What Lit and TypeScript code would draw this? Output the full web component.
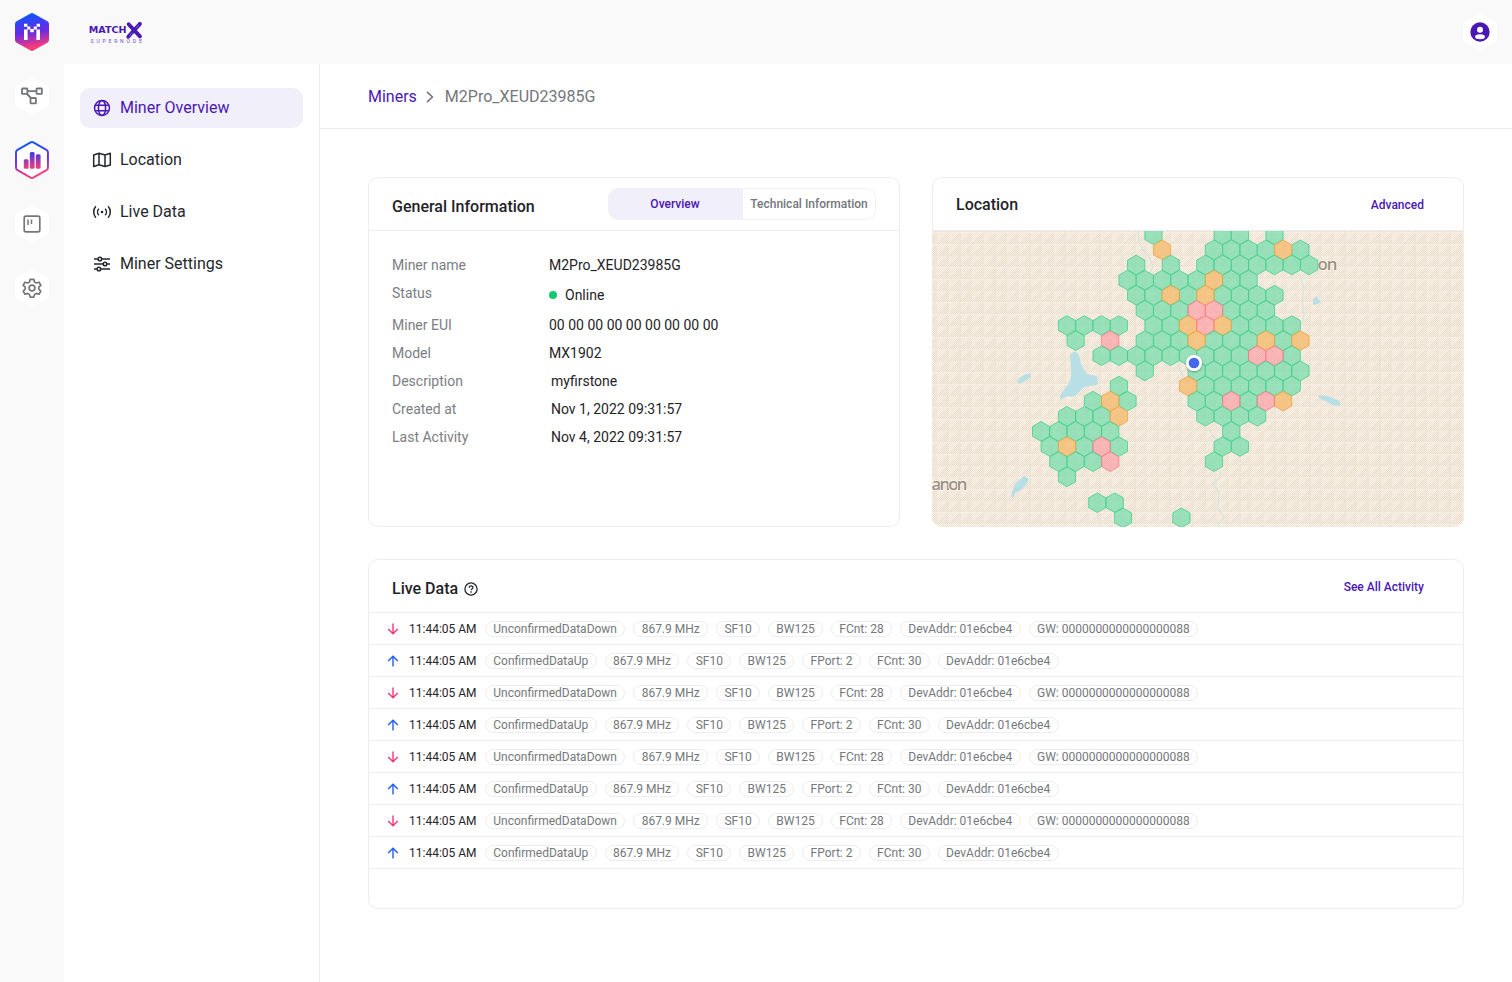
import { LitElement, html, svg, css } from "lit";
import { customElement } from "lit/decorators.js";

type Tone = "g" | "o" | "p";

const HALF = 8.645;
const PITCH = 15.13;
// Each row: [row index, "column+tone" list]
const ROWS: Array<[number, string]> = [
  [-6, "10g 18g 20g 24g"],
  [-5, "17g 19g 21g 23g 27g 11o 25o"],
  [-4, "8g 12g 16g 18g 20g 22g 24g 26g 28g"],
  [-3, "7g 9g 11g 13g 15g 19g 21g 17o"],
  [-2, "8g 10g 14g 18g 20g 22g 24g 12o 16o"],
  [-1, "9g 11g 13g 19g 21g 23g 15p 17p"],
  [0, "0g 2g 4g 6g 10g 12g 20g 22g 24g 26g 14o 18o 16p"],
  [1, "1g 9g 11g 13g 17g 19g 21g 25g 15o 23o 27o 5p"],
  [2, "4g 6g 8g 10g 12g 14g 16g 18g 20g 26g 22p 24p"],
  [3, "9g 15g 17g 19g 21g 23g 25g 27g"],
  [4, "6g 16g 18g 20g 22g 24g 26g 14o"],
  [5, "3g 7g 15g 17g 21g 5o 25o 19p 23p"],
  [6, "0g 2g 4g 16g 18g 20g 22g 6o"],
  [7, "-3g -1g 1g 3g 5g 19g"],
  [8, "-2g 2g 6g 18g 20g 0o 4p"],
  [9, "-1g 1g 3g 17g 5p"],
  [10, "0g"],
];

const CELLS: Array<{ x: number; y: number; tone: Tone }> = ROWS.flatMap(([r, list]) =>
  list.split(" ").map((c) => ({
    x: 135 + parseInt(c, 10) * HALF,
    y: 94.5 + r * PITCH,
    tone: c.slice(-1) as Tone,
  }))
).concat([
  { x: 165.3, y: 271.7, tone: "g" },
  { x: 182.7, y: 271.7, tone: "g" },
  { x: 191, y: 286.8, tone: "g" },
  { x: 249.4, y: 286.8, tone: "g" },
]);

const hexPoints = (x: number, y: number) =>
  [[0, -9.8], [8.6, -4.9], [8.6, 4.9], [0, 9.8], [-8.6, 4.9], [-8.6, -4.9]]
    .map(([a, b]) => `${(x + a).toFixed(2)},${(y + b).toFixed(2)}`)
    .join(" ");

// Stippled triangles, three by three to a 35px tile so every dot sits on a whole pixel.
const stipple = (dense: boolean) => {
  let d = "";
  for (const oy of [0, 12, 23])
    for (const ox of [0, 12, 23])
      for (let y = 0; y < 11; y++)
        for (let x = 0; x < 12; x++)
          if ((x + y) % 2 === 0 && x + y > 9 === dense) d += `M${ox + x} ${oy + y}h1v1h-1z`;
  return d;
};

@customElement("coverage-map")
class CoverageMap extends LitElement {
  static styles = css`
    :host { display: block; width: 532px; height: 296px; overflow: hidden; border-radius: 0 0 10px 10px; }
    svg { display: block; }
    .g { fill: #5cdba1; fill-opacity: 0.6; stroke: #3fce8b; stroke-opacity: 0.75; }
    .o { fill: #f6b158; fill-opacity: 0.66; stroke: #f0a440; stroke-opacity: 0.8; }
    .p { fill: #ff949e; fill-opacity: 0.62; stroke: #fa7480; stroke-opacity: 0.75; }
    .label { font: 500 17px "Noto Sans", sans-serif; fill: #998d80; stroke: #f8f2e8; stroke-width: 2px; paint-order: stroke; }
  `;
  render() {
    return html`<svg width="532" height="296" viewBox="0 0 532 296">
      <defs>
        <pattern id="land" x="5" y="2" width="35" height="35" patternUnits="userSpaceOnUse">
          <path fill="#f2e9dc" d=${stipple(false)}/><path fill="#e8decf" d=${stipple(true)}/>
        </pattern>
        <filter id="shade" x="-50%" y="-50%" width="200%" height="200%">
          <feDropShadow dx="0" dy="1" stdDeviation="1.2" flood-opacity="0.35"/>
        </filter>
      </defs>
      <rect width="532" height="296" fill="#f7eee1"/>
      <rect width="532" height="296" fill="url(#land)"/>
      <g fill="#b9dfe6">
        <path d="M138 124c2-4 7-4 9 0 1 5 2 9 4 13l4 6 10 2 1 8c-5 3-11 1-15 4-4 4-7 8-11 9-5-2-8 1-12 3 0-6 4-10 7-14 5-6 4-11 4-17z"/>
        <path d="M85 149l7-5 6-2 1 4-6 4-6 3z"/>
        <path d="M80 261l3-8 9-8 5 3-3 6-6 6-5 2-2 5-2-2z"/>
        <path d="M381 68l2-1 1-2 5 6-3 2-5 1z"/>
        <path d="M386 164l10 1 7 3 5 2v5l-7-1-6-3-8-4z"/>
      </g>
      <g fill="none" stroke="#d5e3e1" stroke-width="1.2">
        <path d="M206 0l1 10 4 9 7 8 3 9-3 6M368 43l4 15-2 10 2 16-2 8M277 198l4 7 8 8M288 298l-2-6 6-6-6-8 1-17-6-8 7-6v-8M251 128l-5 7 6 12"/>
      </g>
      <text class="label" x="385.5" y="38.5" textLength="20">on</text>
      <text class="label" x="-0.5" y="259" textLength="36">anon</text>
      ${CELLS.map((c) => svg`<polygon class=${c.tone} points=${hexPoints(c.x, c.y)}/>`)}
      <circle cx="262" cy="132" r="8" fill="#fff" filter="url(#shade)"/>
      <circle cx="262" cy="132" r="5.3" fill="#4467ec"/>
    </svg>`;
  }
}

const HEX = "M15.600 0.400a3 3 0 0 1 2.800 0l14 7.900a3 3 0 0 1 1.600 2.600v16.200a3 3 0 0 1-1.600 2.600l-14 7.900a3 3 0 0 1-2.800 0l-14-7.900A3 3 0 0 1 0 27.100V10.900a3 3 0 0 1 1.600-2.600z";

const grad = (id: string) => svg`<linearGradient id=${id} x1="0.42" y1="0" x2="0.58" y2="1">
  <stop offset="0.05" stop-color="#1252ff"/><stop offset="0.5" stop-color="#6a2ae6"/><stop offset="0.9" stop-color="#fb3c78"/></linearGradient>`;

const hexTile = (body: unknown) => html`<svg class="hex" width="34" height="38" viewBox="0 0 34 38"><path d=${HEX} fill="#fff"/>${body}</svg>`;

const INFO: Array<[string, string, string]> = [
  ["Miner name", "M2Pro_XEUD23985G", "v"],
  ["Status", "Online", "v status"],
  ["Miner EUI", "00 00 00 00 00 00 00 00 00", "v"],
  ["Model", "MX1902", "v"],
  ["Description", "myfirstone", "v in"],
  ["Created at", "Nov 1, 2022 09:31:57", "v in"],
  ["Last Activity", "Nov 4, 2022 09:31:57", "v in"],
];

const DOWN = ["UnconfirmedDataDown", "867.9 MHz", "SF10", "BW125", "FCnt: 28", "DevAddr: 01e6cbe4", "GW: 0000000000000000088"];
const UP = ["ConfirmedDataUp", "867.9 MHz", "SF10", "BW125", "FPort: 2", "FCnt: 30", "DevAddr: 01e6cbe4"];

@customElement("app-root")
class AppRoot extends LitElement {
  static styles = css`
    :host { display: block; font-family: Roboto, sans-serif; color: #1f2328; }
    * { box-sizing: border-box; }
    svg { display: block; flex: none; }
    .page { display: grid; grid-template: 64px 918px / 64px 256px 1fr; width: 1512px; height: 982px; overflow: hidden; background: #fff; }
    .top { grid-column: 1 / 4; background: #f9f9f9; display: flex; align-items: center; padding: 0 15px; }
    .brand { margin-left: 39px; padding-top: 1px; overflow: visible; }
    .avatar { margin-left: auto; }
    .rail { background: #f9f9f9; display: flex; flex-direction: column; align-items: center; gap: 26px; padding-top: 13px; }
    .side { border-right: 1px solid #ebedf0; padding: 24px 16px; display: flex; flex-direction: column; gap: 12px; }
    .item { height: 40px; border-radius: 10px; display: flex; align-items: center; gap: 8px; padding-left: 12px; font-size: 16px; line-height: 24px; color: #24282c; }
    .item.on { background: #f1eff9; color: #4a17b5; }
    .crumbs { height: 65px; border-bottom: 1px solid #ebedf0; padding: 1px 48px 0; display: flex; align-items: center; font-size: 16px; color: #74777c; }
    .crumbs a { color: #4a17b5; }
    .crumbs svg { margin: 0 11px 0 9px; }
    .body { padding: 48px; display: grid; grid-template-columns: 532px 532px; gap: 32px; }
    .card { border: 1px solid #ebedf0; border-radius: 10px; height: 350px; }
    .wide { grid-column: 1 / 3; }
    .head { height: 53px; border-bottom: 1px solid #ebedf0; display: flex; align-items: center; justify-content: space-between; padding: 0 23px; }
    .title { font-size: 16px; font-weight: 500; line-height: 24px; display: flex; align-items: center; gap: 6px; padding-top: 1px; }
    .low { padding-top: 5px; }
    .link { font-size: 12px; font-weight: 500; line-height: 16px; color: #4a17b5; padding: 2px 16px 0 0; }
    .tabs { display: flex; width: 268px; height: 32px; border: 1px solid #f1eff9; border-radius: 10px; overflow: hidden; font-size: 12px; font-weight: 500; line-height: 30px; text-align: center; color: #74777c; }
    .tab { flex: 1; }
    .tab.on { flex: 0 0 134px; background: #f1eff9; color: #4a17b5; padding-right: 2px; }
    .info { display: grid; grid-template-columns: 157px 1fr; row-gap: 8px; padding: 24px 23px; font-size: 14px; line-height: 20px; }
    .k { color: #7b7e83; }
    .in { padding-left: 2px; }
    .status { display: flex; align-items: center; gap: 8px; height: 24px; }
    .dot { width: 8px; height: 8px; border-radius: 50%; background: #17c672; }
    .map { margin-left: -1px; }
    .row { height: 32px; border-bottom: 1px solid #ebedf0; display: flex; align-items: center; padding-left: 18px; font-size: 12px; }
    .time { width: 76px; margin-left: 10px; }
    .chips { display: flex; gap: 8px; }
    .chip { height: 16px; line-height: 14px; padding: 0 7.4px 0 7.26px; border: 1px solid #ebedf0; border-radius: 8px; color: #74777c; white-space: nowrap; }
    .mt { font: 700 9.3px "DejaVu Sans", sans-serif; }
    .sn { font: 5.4px Roboto, sans-serif; }
  `;

  render() {
    return html`<div class="page">
      <header class="top">
        <svg width="34" height="38" viewBox="0 0 34 38">
          <defs>${grad("a")}</defs>
          <path d=${HEX} fill="url(#a)"/>
          <path fill="#fff" d="M9 10.700h3.400v3H9zM21.600 10.700H25v3h-3.400zM12.200 13.400h3.100v3.200h-3.100zM18.700 13.400h3.100v3.200h-3.100zM15.200 16h3.600v3.200h-3.600zM9 16.600h3.600V27H9zM21.400 16.600H25V27h-3.600z"/>
        </svg>
        <svg class="brand" width="56" height="24" viewBox="0 0 56 24">
          <text class="mt" x="-0.500" y="12.500" textLength="39.500" lengthAdjust="spacingAndGlyphs" fill="#4a17b5">MATCH</text>
          <path d="M41.200 3.400l11.800 12.600M53 3L40.800 16.500" stroke="#4a17b5" stroke-width="4" stroke-linecap="round"/>
          <path d="M42 15.200l3-3.200M48.800 7.600l3-3.200M43.500 16l2.500-2.700" stroke="#a58bdd" stroke-width="0.700"/>
          <text class="sn" x="1.500" y="22.600" textLength="53.500" fill="#7550cc">SUPERNODE</text>
        </svg>
        <div class="avatar">${hexTile(svg`<g transform="translate(17 19)"><circle r="9.700" fill="#4a17b5"/><circle cy="-2.300" r="3" fill="#fff"/><ellipse cy="4.800" rx="5" ry="2.500" fill="#fff"/></g>`)}</div>
      </header>

      <nav class="rail">
        ${hexTile(svg`<g fill="none" stroke="#74777c" stroke-width="1.800" stroke-linejoin="round"><rect x="7" y="11.500" width="5.400" height="5.400" rx=".6"/><rect x="21.500" y="11.500" width="5.400" height="5.400" rx=".6"/><rect x="15.500" y="21" width="5.400" height="5.400" rx=".6"/><path d="M12.400 14.200h9.100M11.500 16.500l5 5"/></g>`)}
        <svg width="34" height="38" viewBox="0 0 34 38">
          <defs>${grad("b")}<linearGradient id="c" gradientUnits="userSpaceOnUse" x1="0" y1="9" x2="0" y2="28"><stop offset="0.100" stop-color="#3f37e8"/><stop offset="1" stop-color="#fb3c78"/></linearGradient></defs>
          <path d=${HEX} fill="#fff" stroke="url(#b)" stroke-width="2" transform="translate(1 1) scale(.94 .947)"/>
          <g fill="url(#c)"><rect x="8.800" y="18.300" width="4.800" height="9.500" rx="1.500"/><rect x="14.800" y="11" width="4.800" height="16.800" rx="1.500"/><rect x="20.800" y="13.300" width="4.800" height="14.500" rx="1.500"/></g>
        </svg>
        ${hexTile(svg`<g fill="none" stroke="#74777c" stroke-width="1.700"><rect x="9.200" y="11.200" width="15.600" height="15.600" rx="1.800"/><path d="M13 14.500v5.500M16.500 14.500v4.500" stroke-width="1.500"/></g>`)}
        ${hexTile(svg`<g fill="none" stroke="#74777c" stroke-width="1.700" stroke-linejoin="round"><path d="M15.200 10.300h3.600l.7 2.700 1.800 1 2.700-.8 1.800 3.100-2 1.900v2l2 1.900-1.800 3.100-2.700-.8-1.800 1-.7 2.700h-3.600l-.7-2.700-1.800-1-2.700.8-1.800-3.100 2-1.900v-2l-2-1.900 1.800-3.100 2.700.8 1.800-1z"/><circle cx="17" cy="19" r="2.900"/></g>`)}
      </nav>

      <nav class="side">
        <div class="item on">
          <svg width="20" height="20" viewBox="0 0 20 20" fill="none" stroke="currentColor" stroke-width="1.500"><circle cx="10" cy="10" r="7.500"/><ellipse cx="10" cy="10" rx="3.600" ry="7.500"/><path d="M3.200 7.300h13.600M3.200 12.700h13.600"/></svg>
          <span>Miner Overview</span></div>
        <div class="item">
          <svg width="20" height="20" viewBox="0 0 20 20" fill="none" stroke="currentColor" stroke-width="1.500" stroke-linejoin="round"><path d="M1.700 5l5.300-1.700 6 1.700 5.300-1.700v11.800L13 16.500l-6-1.700-5.300 1.700zM7 3.300v11.500M13 5v11.500"/></svg>
          <span>Location</span></div>
        <div class="item">
          <svg width="20" height="20" viewBox="0 0 20 20" fill="none" stroke="currentColor" stroke-width="1.500"><circle cx="10" cy="10" r="1.300" fill="currentColor" stroke="none"/><path d="M6.900 6.700a4.700 4.700 0 0 0 0 6.600M13.100 6.700a4.700 4.700 0 0 1 0 6.600M3.900 4.300a8.500 8.500 0 0 0 0 11.400M16.100 4.300a8.500 8.500 0 0 1 0 11.400"/></svg>
          <span>Live Data</span></div>
        <div class="item">
          <svg width="20" height="20" viewBox="0 0 20 20" fill="none" stroke="currentColor" stroke-width="1.500"><path d="M2 5h3.900M9.900 5H18M2 10h9M15 10h3M2 15h2.900M8.900 15H18"/><circle cx="7.900" cy="5" r="1.800"/><circle cx="13" cy="10" r="1.800"/><circle cx="6.900" cy="15" r="1.800"/></svg>
          <span>Miner Settings</span></div>
      </nav>

      <main>
        <div class="crumbs"><a>Miners</a>
          <svg width="8" height="12" viewBox="0 0 8 12" fill="none" stroke="#74777c" stroke-width="1.600"><path d="M1 .8L6.400 6 1 11.200"/></svg>
          <span>M2Pro_XEUD23985G</span></div>
        <div class="body">
          <section class="card">
            <div class="head"><div class="title low">General Information</div>
              <div class="tabs"><div class="tab on">Overview</div><div class="tab">Technical Information</div></div></div>
            <div class="info">
              ${INFO.map(([k, v, c]) => html`<div class="k">${k}</div><div class=${c}>${k === "Status" ? html`<span class="dot"></span>` : ""}<span>${v}</span></div>`)}
            </div>
          </section>
          <section class="card">
            <div class="head"><div class="title">Location</div><div class="link">Advanced</div></div>
            <coverage-map class="map"></coverage-map>
          </section>
          <section class="card wide">
            <div class="head"><div class="title low">Live Data
              <svg width="14" height="14" viewBox="0 0 14 14" fill="none" stroke="#24282c" stroke-width="1.300"><circle cx="7" cy="7" r="6.100"/><path d="M5.200 5.700c0-2.300 3.700-2.300 3.700-.1 0 1.300-1.800 1.400-1.800 2.700"/><path d="M7.100 9.300v1.400"/></svg>
              </div><div class="link">See All Activity</div></div>
            ${[0, 1, 2, 3, 4, 5, 6, 7].map((i) => html`<div class="row">
              <svg width="12" height="12" viewBox="0 0 12 12" fill="none" stroke-width="1.400" stroke=${i % 2 ? "#1f5eff" : "#f5367b"}>
                <path d=${i % 2 ? "M6 11.500V1.300M1.200 6L6 1.200 10.800 6" : "M6 .5v10.200M1.200 6L6 10.800 10.800 6"}/></svg>
              <span class="time">11:44:05 AM</span>
              <div class="chips">${(i % 2 ? UP : DOWN).map((t) => html`<span class="chip">${t}</span>`)}</div>
            </div>`)}
          </section>
        </div>
      </main>
    </div>`;
  }
}
